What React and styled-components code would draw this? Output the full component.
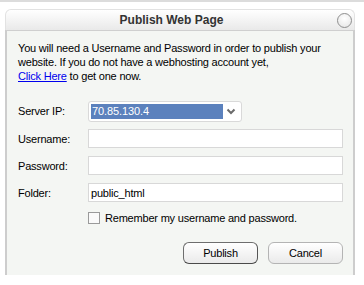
import { useState } from "react";
import styled, { createGlobalStyle } from "styled-components";

const GlobalStyle = createGlobalStyle`
  body {
    margin: 0;
    background: #ffffff;
    font-family: "Liberation Sans", Arial, sans-serif;
    font-size: 11px;
    color: #000000;
  }
`;

const Page = styled.div`
  width: 364px;
  height: 285px;
  overflow: hidden;
  border-top: 2px solid #dcdcdc;
  box-sizing: border-box;
  padding-top: 7px;
`;

const Dialog = styled.div`
  margin-left: 5px;
  width: 350px;
`;

const TitleBar = styled.div`
  height: 21px;
  display: flex;
  align-items: center;
  justify-content: center;
  padding-right: 17px;
  position: relative;
  border: 1px solid #e2e2e2;
  border-bottom: none;
  border-radius: 6px 6px 0 0;
  background: linear-gradient(#ffffff, #e9e9e9);
  box-sizing: border-box;
`;

const Title = styled.h1`
  margin: 0;
  font-size: 12px;
  font-weight: bold;
  color: #333333;
`;

const CloseButton = styled.button`
  position: absolute;
  right: 2px;
  top: 3px;
  width: 15px;
  height: 15px;
  padding: 0;
  border: 1px solid #8e8e8e;
  border-radius: 50%;
  background: radial-gradient(circle at 50% 35%, #ffffff, #e4e4e4);
`;

const Body = styled.div`
  border-top: 1px solid #cfcfcf;
  border-left: 2px solid #cdcdcd;
  border-right: 2px solid #cdcdcd;
  background: #f4f6f3;
  height: 245px;
  box-sizing: border-box;
  padding: 10px 9px 0 11px;
`;

const Intro = styled.p`
  margin: 0;
  line-height: 14px;
  letter-spacing: -0.2px;
`;

const Link = styled.a`
  color: #0000ee;
  text-decoration: underline;
  cursor: pointer;
`;

const Form = styled.form`
  margin-top: 18px;
  display: grid;
  grid-template-columns: 70px 255px;
  row-gap: 8px;
  align-items: center;
`;

const Label = styled.label`
  letter-spacing: -0.2px;
`;

const Select = styled.div`
  width: 154px;
  height: 21px;
  box-sizing: border-box;
  border: 1px solid #d9d9d9;
  border-radius: 3px;
  background: #ffffff;
  display: flex;
  align-items: center;
  padding: 2px;
  margin-bottom: -1px;
`;

const Selected = styled.span`
  flex: 1;
  height: 15px;
  line-height: 15px;
  background: #5b81bd;
  color: #ffffff;
  padding-left: 1px;
  letter-spacing: -0.1px;
`;

const Chevron = styled.svg`
  width: 16px;
  height: 15px;
  flex: none;
`;

const Input = styled.input`
  width: 255px;
  height: 19px;
  box-sizing: border-box;
  border: 1px solid #d8d8d8;
  background: #ffffff;
  padding: 0 2px;
  font-family: "Liberation Sans", Arial, sans-serif;
  font-size: 11px;
  letter-spacing: -0.2px;
  outline: none;
`;

const CheckRow = styled.label`
  grid-column: 2;
  display: flex;
  align-items: center;
  gap: 5px;
  margin-top: 2px;
  letter-spacing: -0.2px;
`;

const Box = styled.span`
  width: 12px;
  height: 12px;
  box-sizing: border-box;
  border: 1px solid #9a9a9a;
  background: ${(p) => (p.checked ? "#e8e8e8" : "#fafafa")};
`;

const Buttons = styled.div`
  grid-column: 1 / span 2;
  display: flex;
  justify-content: flex-end;
  gap: 10px;
  margin-top: 10px;
`;

const Button = styled.button`
  width: 75px;
  height: 22px;
  border-radius: 6px;
  border: 1px solid ${(p) => (p.primary ? "#6e6e6e" : "#b4b4b4")};
  ${(p) => p.primary && "border-bottom-color: #4a4a4a; border-right-color: #555555;"}
  background: linear-gradient(#ffffff, #eaeaea);
  font-family: "Liberation Sans", Arial, sans-serif;
  font-size: 11px;
  color: #000000;
  padding: 0;
  letter-spacing: -0.2px;
`;

export default function App() {
  const [remember, setRemember] = useState(false);

  return (
    <Page>
      <GlobalStyle />
      <Dialog>
        <TitleBar>
          <Title>Publish Web Page</Title>
          <CloseButton aria-label="Close" />
        </TitleBar>
        <Body>
          <Intro>
            You will need a Username and Password in order to publish your
            <br />
            website. If you do not have a webhosting account yet,
            <br />
            <Link>Click Here</Link> to get one now.
          </Intro>
          <Form onSubmit={(e) => e.preventDefault()}>
            <Label>Server IP:</Label>
            <Select>
              <Selected>70.85.130.4</Selected>
              <Chevron viewBox="0 0 16 15">
                <path
                  d="M4.5 5.5 L8 9 L11.5 5.5"
                  fill="none"
                  stroke="#6b6b6b"
                  strokeWidth="2"
                />
              </Chevron>
            </Select>
            <Label htmlFor="username">Username:</Label>
            <Input id="username" />
            <Label htmlFor="password">Password:</Label>
            <Input id="password" type="password" />
            <Label htmlFor="folder">Folder:</Label>
            <Input id="folder" defaultValue="public_html" />
            <CheckRow onClick={() => setRemember(!remember)}>
              <Box checked={remember} />
              Remember my username and password.
            </CheckRow>
            <Buttons>
              <Button primary type="submit">
                Publish
              </Button>
              <Button type="button">Cancel</Button>
            </Buttons>
          </Form>
        </Body>
      </Dialog>
    </Page>
  );
}
